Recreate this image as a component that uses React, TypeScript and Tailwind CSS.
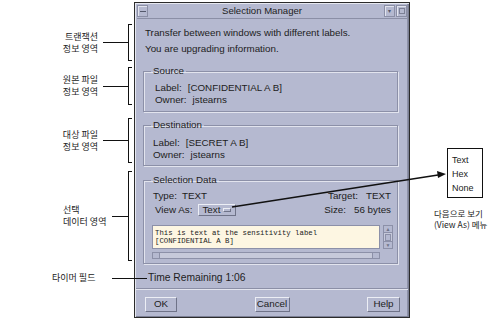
import React from 'react'

function Bracket() {
  return <div className="h-full w-[4px] shrink-0 border-y border-l border-[#111]" />
}

function Group({ title, className, children }: { title: string; className?: string; children: React.ReactNode }) {
  return (
    <fieldset className={'ml-[8px] mr-[11px] border border-[#8c90a8] shadow-[1px_1px_0_#e2e4ee,inset_1px_1px_0_#e2e4ee] ' + (className ?? '')}>
      <legend className="ml-[7px] px-[2px] text-[9.8px] leading-[12px]">{title}</legend>
      {children}
    </fieldset>
  )
}

function Btn({ label, w }: { label: string; w: string }) {
  return (
    <div className={'flex h-[15px] items-center justify-center border border-t-[#eceef5] border-l-[#eceef5] border-b-[#6f7388] border-r-[#6f7388] text-[9.8px] ' + w}>
      {label}
    </div>
  )
}

export default function App() {
  return (
    <div className="relative flex h-[322px] w-[494px] overflow-hidden bg-white text-[#1d1d22]">
      {/* annotations left */}
      <div className="flex w-[134px] shrink-0 flex-col font-['Noto_Sans_CJK_KR','Noto_Sans',sans-serif] text-[9px] leading-[12px] text-[#222]">
        <div className="mt-[24px] flex h-[37px] items-center">
          <div className="w-[98px] text-right">트랜잭션<br />정보 영역</div>
          <div className="ml-[5px] h-px w-[25px] bg-[#111]" />
          <Bracket />
        </div>
        <div className="mt-[6px] flex h-[38px] items-center">
          <div className="w-[98px] text-right">원본 파일<br />정보 영역</div>
          <div className="ml-[5px] h-px w-[25px] bg-[#111]" />
          <Bracket />
        </div>
        <div className="mt-[13px] flex h-[45px] items-center">
          <div className="w-[98px] text-right">대상 파일<br />정보 영역</div>
          <div className="ml-[5px] h-px w-[25px] bg-[#111]" />
          <Bracket />
        </div>
        <div className="mt-[8px] flex h-[90px] items-center">
          <div className="w-[110px] pl-[63px] text-left">선택<br />데이터 영역</div>
          <div className="ml-[2px] h-px w-[16px] bg-[#111]" />
          <Bracket />
        </div>
        <div className="relative z-10 mt-[11px] flex h-[12px] w-[160px] items-center">
          <div className="w-[97px] pl-[52px] whitespace-nowrap">타이머 필드</div>
          <div className="ml-[15px] h-px w-[35px] bg-[#111]" />
        </div>
      </div>

      {/* window */}
      <div className="mt-[2px] flex h-[316px] w-[276px] shrink-0 flex-col border border-[#2b2b2b] bg-[#b5b9d0] font-['Liberation_Sans',Arial,sans-serif] shadow-[inset_1px_1px_0_#e6e8f0,inset_-1px_-1px_0_#7c8095,inset_-2px_0_0_#8e92a8]">
        <div className="mx-[2px] mt-[1px] flex h-[15px] items-center border-b border-[#8b8fa6]">
          <div className="flex h-[12px] w-[11px] items-center justify-center border border-[#8b8fa6] shadow-[inset_1px_1px_0_#e2e4ee]">
            <div className="h-px w-[6px] bg-[#55596c]" />
          </div>
          <div className="flex-1 pr-[8px] text-center text-[9.6px] leading-[12px]">Selection Manager</div>
          <div className="flex h-[12px] w-[11px] items-center justify-center border border-[#8b8fa6] shadow-[inset_1px_1px_0_#e2e4ee] text-[6px] leading-none text-[#55596c]">▾</div>
          <div className="ml-[1px] flex h-[12px] w-[11px] items-center justify-center border border-[#8b8fa6] shadow-[inset_1px_1px_0_#e2e4ee]">
            <div className="h-[6px] w-[6px] border border-[#7c8095]" />
          </div>
        </div>

        <div className="mt-[7px] pl-[10px] text-[9.8px] leading-[14px]">Transfer between windows with different labels.</div>
        <div className="mt-[2px] pl-[10px] text-[9.8px] leading-[14px]">You are upgrading information.</div>

        <Group title="Source" className="mt-[9px] h-[47px]">
          <div className="pl-[11px] pt-[5px] text-[9.8px] leading-[12px]">
            <div><span className="mr-[6px]">Label:</span>[CONFIDENTIAL A B]</div>
            <div><span className="mr-[6px]">Owner:</span>jstearns</div>
          </div>
        </Group>

        <Group title="Destination" className="mt-[7px] h-[47px]">
          <div className="pl-[9px] pt-[6px] text-[9.8px] leading-[12px]">
            <div><span className="mr-[6px]">Label:</span>[SECRET A B]</div>
            <div><span className="mr-[6px]">Owner:</span>jstearns</div>
          </div>
        </Group>

        <Group title="Selection Data" className="mt-[8px] h-[90px]">
          <div className="pl-[9px] pr-[6px] pt-[4px] text-[9.8px]">
            <div className="flex h-[12px] items-center justify-between leading-[12px]">
              <div><span className="mr-[5px]">Type:</span>TEXT</div>
              <div><span className="mr-[8px]">Target:</span>TEXT</div>
            </div>
            <div className="mt-[1px] flex h-[14px] items-center justify-between leading-[12px]">
              <div className="flex items-center pl-[2px]">
                <span className="mr-[6px]">View As:</span>
                <div className="flex h-[12px] w-[38px] items-center border border-t-[#eceef5] border-l-[#eceef5] border-b-[#6f7388] border-r-[#6f7388] pl-[3px]">
                  <span>Text</span>
                  <div className="ml-[3px] h-[4px] w-[8px] border border-t-[#eceef5] border-l-[#eceef5] border-b-[#6f7388] border-r-[#6f7388]" />
                </div>
              </div>
              <div><span className="mr-[8px]">Size:</span>56 bytes</div>
            </div>
          </div>
          <div className="mt-[8px] flex pl-[8px]">
            <div className="h-[24px] w-[228px] border border-[#8c90a8] bg-[#fdf6e2] pl-[2px] pt-[3px] font-['Liberation_Mono',monospace] text-[7.3px] leading-[8px] text-[#222]">
              This is text at the sensitivity label<br />[CONFIDENTIAL A B]
            </div>
            <div className="ml-[3px] flex h-[24px] w-[10px] flex-col border border-[#8c90a8] bg-[#c6c9da]">
              <div className="h-[7px] border-b border-[#8c90a8] bg-[#b5b9d0] text-center text-[5px] leading-[7px] text-[#6f7388]">▲</div>
              <div className="mx-[1px] mt-[1px] h-[7px] border border-[#8c90a8] bg-[#b5b9d0]" />
              <div className="mt-auto h-[7px] border-t border-[#8c90a8] bg-[#b5b9d0] text-center text-[5px] leading-[7px] text-[#6f7388]">▼</div>
            </div>
          </div>
          <div className="ml-[8px] mt-[3px] flex h-[7px] w-[228px] justify-between border border-[#8c90a8] bg-[#c6c9da]">
            <div className="w-[7px] border-r border-[#8c90a8] bg-[#b5b9d0]" />
            <div className="w-[7px] border-l border-[#8c90a8] bg-[#b5b9d0]" />
          </div>
        </Group>

        <div className="mt-[7px] pl-[13px] text-[10.3px] leading-[14px]">Time Remaining 1:06</div>
        <div className="mx-[1px] mt-[3px] h-px bg-[#8b8fa6] shadow-[0_1px_0_#e2e4ee]" />
        <div className="mt-[8px] flex justify-between pl-[10px] pr-[9px]">
          <Btn label="OK" w="w-[32px]" />
          <Btn label="Cancel" w="w-[35px]" />
          <Btn label="Help" w="w-[33px]" />
        </div>
      </div>

      {/* right annotation */}
      <div className="flex flex-1 flex-col font-['Noto_Sans_CJK_KR','Noto_Sans',sans-serif] text-[#222]">
        <div className="ml-[37px] mt-[148px] flex h-[50px] w-[36px] flex-col justify-center border border-[#111] bg-white pl-[4px] pt-[2px] font-['Liberation_Sans',Arial,sans-serif] text-[9px] leading-[14px]">
          <div>Text</div>
          <div>Hex</div>
          <div>None</div>
        </div>
        <div className="ml-[24px] mt-[10px] whitespace-nowrap text-[8.5px] leading-[11px]">
          다음으로 보기<br />(View As) 메뉴
        </div>
      </div>

      {/* arrow to the View As menu */}
      <svg className="pointer-events-none absolute inset-0" width="494" height="322" viewBox="0 0 494 322">
        <line x1="232" y1="207" x2="438" y2="175" stroke="#111" strokeWidth="1.3" />
        <polygon points="446,174 437,171 438,178" fill="#111" />
      </svg>
    </div>
  )
}
